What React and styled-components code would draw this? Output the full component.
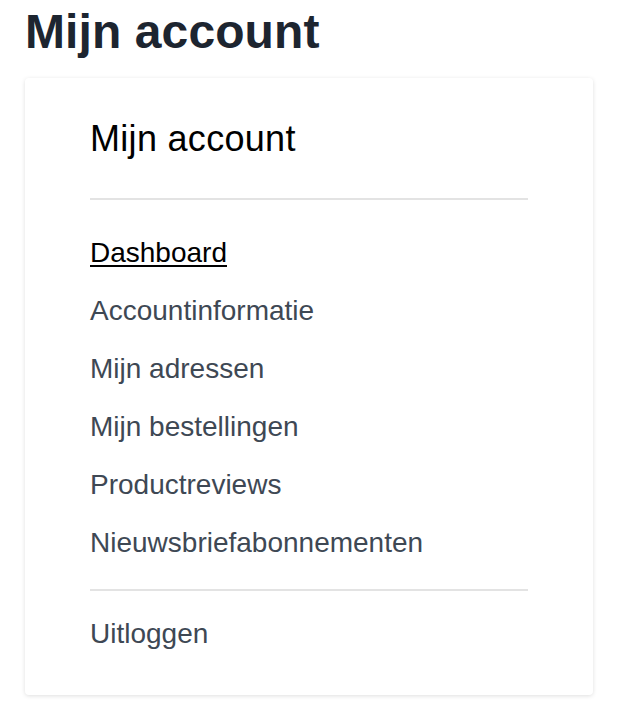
import React from "react";
import styled, { createGlobalStyle } from "styled-components";

const GlobalStyle = createGlobalStyle`
  * {
    box-sizing: border-box;
  }
  body {
    margin: 0;
    background: #ffffff;
    font-family: "Liberation Sans", Arial, Helvetica, sans-serif;
  }
`;

const links = [
  { label: "Dashboard", active: true },
  { label: "Accountinformatie" },
  { label: "Mijn adressen" },
  { label: "Mijn bestellingen" },
  { label: "Productreviews" },
  { label: "Nieuwsbriefabonnementen" }
];

function App() {
  return (
    <>
      <GlobalStyle />
      <Page>
        <PageTitle>Mijn account</PageTitle>
        <Card>
          <CardTitle>Mijn account</CardTitle>
          <Divider />
          <NavList>
            {links.map((link) => (
              <NavItem key={link.label}>
                <NavLink href="#" $active={link.active}>
                  {link.label}
                </NavLink>
              </NavItem>
            ))}
          </NavList>
          <Divider $bottom />
          <NavList>
            <NavItem>
              <NavLink href="#">Uitloggen</NavLink>
            </NavItem>
          </NavList>
        </Card>
      </Page>
    </>
  );
}

export default App;

const Page = styled.div`
  padding: 3px 25px 17px 25px;
`;

const PageTitle = styled.h1`
  margin: 0 0 17px 0;
  font-size: 48px;
  line-height: 1.2;
  font-weight: 700;
  letter-spacing: 0.1px;
  color: #1d2530;
`;

const Card = styled.div`
  background: #ffffff;
  border-radius: 4px;
  box-shadow: 0 1px 4px rgba(0, 0, 0, 0.13);
  padding: 39px 65px 32px 65px;
`;

const CardTitle = styled.h2`
  margin: 0;
  font-size: 36px;
  line-height: 1.2;
  font-weight: 400;
  letter-spacing: 0.3px;
  color: #000000;
`;

const Divider = styled.hr`
  border: 0;
  height: 2px;
  background: #e3e3e3;
  margin: ${(props) => (props.$bottom ? "17px 0 14px" : "38px 0 24px")};
`;

const NavList = styled.ul`
  list-style: none;
  margin: 0;
  padding: 0;
`;

const NavItem = styled.li`
  height: 58px;
  display: flex;
  align-items: center;
`;

const NavLink = styled.a`
  font-size: 28px;
  line-height: 58px;
  color: ${(props) => (props.$active ? "#000000" : "#3e4854")};
  text-decoration: ${(props) => (props.$active ? "underline" : "none")};
  text-underline-offset: 3px;
  text-decoration-thickness: 2px;
`;
